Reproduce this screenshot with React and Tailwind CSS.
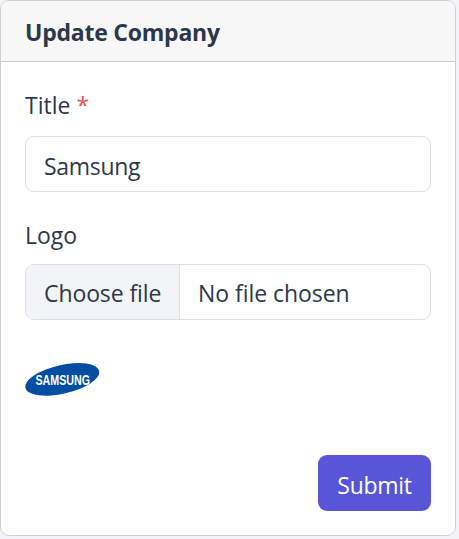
function SamsungLogo() {
    return (
        <svg width="76" height="36" viewBox="0 0 76 36" className="block overflow-visible">
            <ellipse cx="37.3" cy="17.4" rx="37.9" ry="14.3" transform="rotate(-13 37.3 17.4)" fill="#034ea2" />
            <text
                x="10.5"
                y="22.5"
                textLength="54.5"
                lengthAdjust="spacingAndGlyphs"
                fill="#fff"
                className="font-['Liberation_Sans'] text-[15px] leading-none font-bold"
            >
                SAMSUNG
            </text>
        </svg>
    );
}

function App() {
    return (
        <div className="h-[539px] w-[459px] overflow-hidden bg-[#f3f4f7] font-['Open_Sans',sans-serif] text-[23px] leading-9 text-[#2c3849]">
            <div className="h-[536px] w-[456px] rounded-[9px] border border-[#cfd0d2] bg-white">

                {/* header */}
                <div className="h-[61px] rounded-t-lg border-b border-[#cacbcc] bg-[#f7f7f7] px-6 pt-[13px]">
                    <h1 className="font-bold tracking-[-0.23px]">Update Company</h1>
                </div>

                <form className="px-6 pt-[25px]" onSubmit={(e) => e.preventDefault()}>
                    {/* title */}
                    <label htmlFor="title" className="block h-[49px]">
                        Title <span className="text-[#e55353]">*</span>
                    </label>
                    <input
                        id="title"
                        type="text"
                        defaultValue="Samsung"
                        className="block h-14 w-[406px] rounded-[9px] border border-[#dbdfe6] px-[18px] pt-[3px] tracking-[-0.3px] outline-none"
                    />

                    {/* logo */}
                    <span className="mt-[25px] block h-[47px]">Logo</span>
                    <label className="flex h-14 w-[406px] cursor-pointer overflow-hidden rounded-[9px] border border-[#dbdfe6]">
                        <span className="w-[154px] border-r border-[#dbdfe6] bg-[#f3f4f7] pt-2.5 pl-[18px] tracking-[-0.1px] whitespace-nowrap">Choose file</span>
                        <span className="pt-2.5 pl-[18px] tracking-[-0.05px]">No file chosen</span>
                        <input type="file" className="hidden" />
                    </label>

                    <div className="mt-[42px]">
                        <SamsungLogo />
                    </div>

                    {/* submit */}
                    <div className="mt-[57px] flex w-[406px] justify-end">
                        <button type="submit" className="h-14 w-[113px] rounded-[9px] bg-[#5856d6] pt-[3px] tracking-[-0.3px] text-white">
                            Submit
                        </button>
                    </div>
                </form>
            </div>
        </div>
    );
}

export default App;
